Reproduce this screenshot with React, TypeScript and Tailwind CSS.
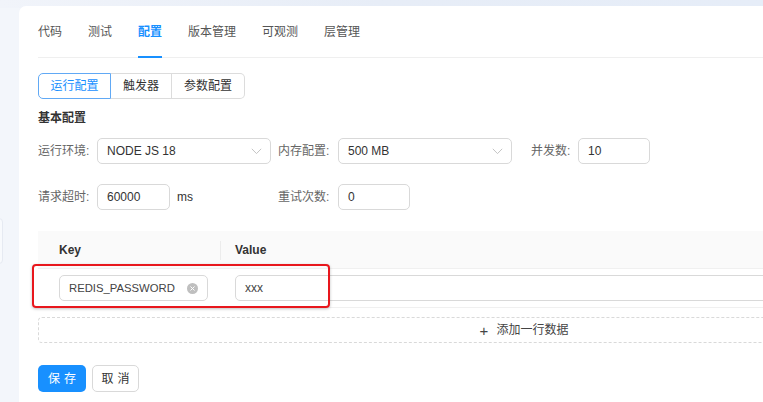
import React from "react";

const font = { fontFamily: '"Liberation Sans", "Noto Sans CJK SC", sans-serif' };

function Chevron() {
  return (
    <svg width="11" height="7" viewBox="0 0 11 7" fill="none" className="shrink-0">
      <path d="M0.8 0.8 L5.5 5.6 L10.2 0.8" stroke="#c4c4c4" strokeWidth="1" />
    </svg>
  );
}

function Select({ value }: { value: string }) {
  return (
    <div className="w-[174px] h-[26px] border border-[#d9d9d9] rounded-[5px] flex items-center justify-between pl-[9px] pr-[8px] text-[12px] text-[#333]">
      <span>{value}</span>
      <Chevron />
    </div>
  );
}

function Input({ value, w }: { value: string; w: string }) {
  return (
    <div className={`${w} h-[26px] border border-[#d9d9d9] rounded-[5px] flex items-center pl-[9px] text-[12px] text-[#333]`}>
      {value}
    </div>
  );
}

export default function App() {
  const tabs = ["代码", "测试", "配置", "版本管理", "可观测", "层管理"];
  return (
    <div className="relative w-[763px] h-[402px] overflow-hidden bg-[#f3f6fb]" style={font}>
      <div className="absolute left-0 top-0 w-full h-[8px] bg-gradient-to-r from-[#f1f4fa] via-[#e7edf7] to-[#e6edf8]" />
      <div className="absolute left-[-12px] top-[218px] w-[15px] h-[46px] rounded-[4px] border border-[#e6eaf2] bg-[#f8fafd]" />
      <div className="relative ml-[19px] mt-[6px] w-[1010px] h-[420px] bg-white rounded-tl-[7px] pl-[19px]">
        {/* Tabs */}
        <div className="flex h-[52px] border-b border-[#efefef] w-[990px]">
          {tabs.map((t) => (
            <div
              key={t}
              className={`relative flex items-center mr-[26px] text-[12px] ${t === "配置" ? "text-[#1890ff] font-semibold" : "text-[#555]"}`}
            >
              {t}
              {t === "配置" && <div className="absolute left-0 right-0 bottom-[-1px] h-[2px] bg-[#1890ff]" />}
            </div>
          ))}
        </div>

        {/* Segmented */}
        <div className="flex mt-[15px] h-[26px] text-[12px]">
          <div className="w-[73px] justify-center flex items-center border border-[#61a9f5] rounded-l-[5px] text-[#1890ff]">运行配置</div>
          <div className="w-[61px] justify-center flex items-center border-y border-r border-[#dcdcdc] text-[#333]">触发器</div>
          <div className="w-[73px] justify-center flex items-center border-y border-r border-[#dcdcdc] rounded-r-[5px] text-[#333]">参数配置</div>
        </div>

        <div className="mt-[11px] text-[12px] font-semibold text-[#333] leading-[17px]">基本配置</div>

        {/* Row 1 */}
        <div className="flex items-center mt-[11px] text-[12px]">
          <div className="flex items-center w-[240px]">
            <span className="w-[59px] text-[#666]">运行环境:</span>
            <Select value="NODE JS 18" />
          </div>
          <div className="flex items-center">
            <span className="w-[60px] text-[#666]">内存配置:</span>
            <Select value="500 MB" />
          </div>
          <div className="flex items-center ml-[19px]">
            <span className="w-[47px] text-[#666]">并发数:</span>
            <Input value="10" w="w-[72px]" />
          </div>
        </div>

        {/* Row 2 */}
        <div className="flex items-center mt-[20px] text-[12px]">
          <div className="flex items-center w-[240px]">
            <span className="w-[59px] text-[#666]">请求超时:</span>
            <Input value="60000" w="w-[73px]" />
            <span className="ml-[7px] text-[#333]">ms</span>
          </div>
          <div className="flex items-center">
            <span className="w-[60px] text-[#666]">重试次数:</span>
            <Input value="0" w="w-[72px]" />
          </div>
        </div>

        {/* Table */}
        <div className="mt-[21px] w-[972px] text-[12px]">
          <div className="flex h-[38px] bg-[#fafafa] border-b border-[#f0f0f0] items-center">
            <div className="w-[183px] pl-[21px] font-semibold text-[#333] relative h-full flex items-center">
              Key
              <div className="absolute right-0 top-[10px] h-[19px] w-px bg-[#ececec]" />
            </div>
            <div className="pl-[14px] font-semibold text-[#333]">Value</div>
          </div>
          <div className="flex h-[39px] border-b border-[#f0f0f0] items-center">
            <div className="w-[183px] pl-[21px]">
              <div className="w-[149px] h-[26px] border border-[#d9d9d9] rounded-[5px] flex items-center justify-between pl-[9px] pr-[9px] text-[#444]">
                <span className="text-[11.3px]">REDIS_PASSWORD</span>
                <span className="w-[11px] h-[11px] rounded-full bg-[#bfbfbf] flex items-center justify-center">
                  <svg width="5" height="5" viewBox="0 0 5 5">
                    <path d="M0.5 0.5 L4.5 4.5 M4.5 0.5 L0.5 4.5" stroke="white" strokeWidth="1" />
                  </svg>
                </span>
              </div>
            </div>
            <div className="pl-[14px] flex-1">
              <div className="w-full h-[26px] border border-[#d9d9d9] rounded-[5px] flex items-center pl-[9px] text-[#444]">xxx</div>
            </div>
          </div>
          <div className="mt-[9px] h-[26px] border border-dashed border-[#d9d9d9] rounded-[4px] flex items-center justify-center text-[#444]">
            <span className="text-[15px] font-light mr-[8px] leading-none">+</span>
            添加一行数据
          </div>
        </div>

        {/* Buttons */}
        <div className="flex mt-[22px] gap-[6px] text-[12px]">
          <div className="w-[48px] h-[27px] rounded-[5px] bg-[#1890ff] text-white flex items-center justify-center tracking-[4px] pl-[4px]">保存</div>
          <div className="w-[47px] h-[27px] rounded-[5px] border border-[#d9d9d9] text-[#333] flex items-center justify-center tracking-[4px] pl-[4px]">取消</div>
        </div>
      </div>

      {/* Red annotation */}
      <div className="absolute left-[32px] top-[264px] w-[298px] h-[44px] border-2 border-[#e8171d] rounded-[4px] shadow-[0_1px_3px_rgba(0,0,0,0.25)]" />
    </div>
  );
}
